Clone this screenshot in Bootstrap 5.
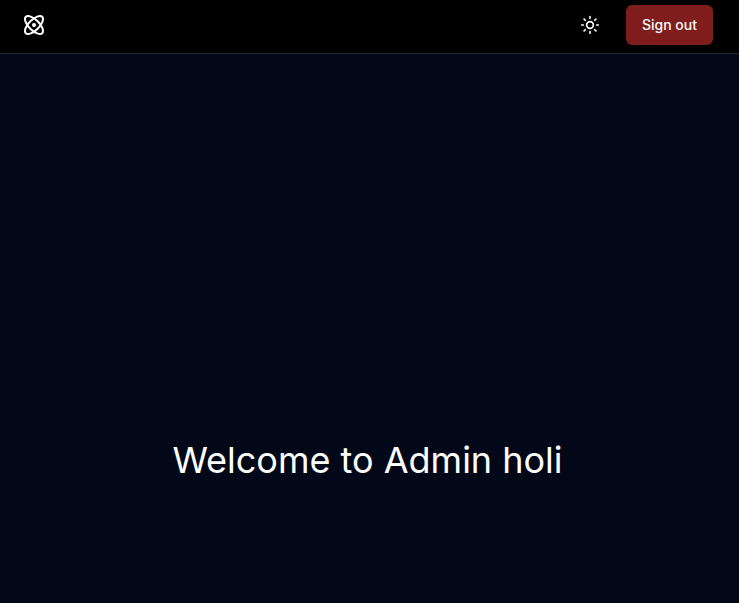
<!DOCTYPE html>
<html lang="en">
<head>
<meta charset="utf-8">
<meta name="viewport" content="width=device-width, initial-scale=1">
<title>Admin</title>
<link href="https://cdn.jsdelivr.net/npm/bootstrap@5.3.0/dist/css/bootstrap.min.css" rel="stylesheet">
<style>
body { background: #020817; color: #fff; font-family: Inter, "Liberation Sans", sans-serif; }
.site-header { background: #000; border-bottom: 1px solid #1e293b; padding: 5px 26px 8px 22px; }
.icon-button { width: 40px; height: 40px; margin-right: 16px; }
.signout { --bs-btn-bg: #7f1d1d; --bs-btn-color: #f8fafc; --bs-btn-hover-bg: #991b1b; --bs-btn-hover-color: #fff; --bs-btn-active-bg: #991b1b; --bs-btn-active-color: #fff; height: 40px; font-size: 14px; line-height: 20px; border: 0; border-radius: 6px; }
.hero { padding: 262px 4px 0 0; }
.welcome { font-size: 36px; line-height: 40px; font-weight: 400; }
</style>
</head>
<body class="min-vh-100 d-flex flex-column">
<header class="site-header d-flex align-items-center justify-content-between">
  <a href="#" class="d-flex text-white" aria-label="Home">
    <svg width="24" height="24" viewBox="0 0 24 24" fill="none" stroke="currentColor" stroke-width="2" stroke-linecap="round" stroke-linejoin="round" aria-hidden="true"><circle cx="12" cy="12" r="1"/><path d="M20.2 20.2c2.04-2.03.02-7.36-4.5-11.9-4.54-4.52-9.87-6.54-11.9-4.5-2.04 2.03-.02 7.36 4.5 11.9 4.54 4.52 9.87 6.54 11.9 4.5Z"/><path d="M15.7 15.7c4.52-4.54 6.54-9.87 4.5-11.9-2.03-2.04-7.36-.02-11.9 4.5-4.52 4.54-6.54 9.87-4.5 11.9 2.03 2.04 7.36.02 11.9-4.5Z"/></svg>
  </a>
  <div class="d-flex align-items-center">
    <button type="button" class="icon-button btn p-0 border-0 text-white d-flex align-items-center justify-content-center" aria-label="Toggle theme">
      <svg width="20" height="20" viewBox="0 0 24 24" fill="none" stroke="currentColor" stroke-width="2" stroke-linecap="round" stroke-linejoin="round" aria-hidden="true"><circle cx="12" cy="12" r="4"/><path d="M12 2v2M12 20v2M4.93 4.93l1.41 1.41M17.66 17.66l1.41 1.41M2 12h2M20 12h2M6.34 17.66l-1.41 1.41M19.07 4.93l-1.41 1.41"/></svg>
    </button>
    <button type="button" class="signout btn px-3 py-2 fw-medium">Sign out</button>
  </div>
</header>
<main class="flex-grow-1 d-flex align-items-center justify-content-center">
  <div class="hero"><h1 class="welcome m-0 text-center">Welcome to Admin holi</h1></div>
</main>
<script src="https://cdn.jsdelivr.net/npm/bootstrap@5.3.0/dist/js/bootstrap.bundle.min.js"></script>
</body>
</html>
